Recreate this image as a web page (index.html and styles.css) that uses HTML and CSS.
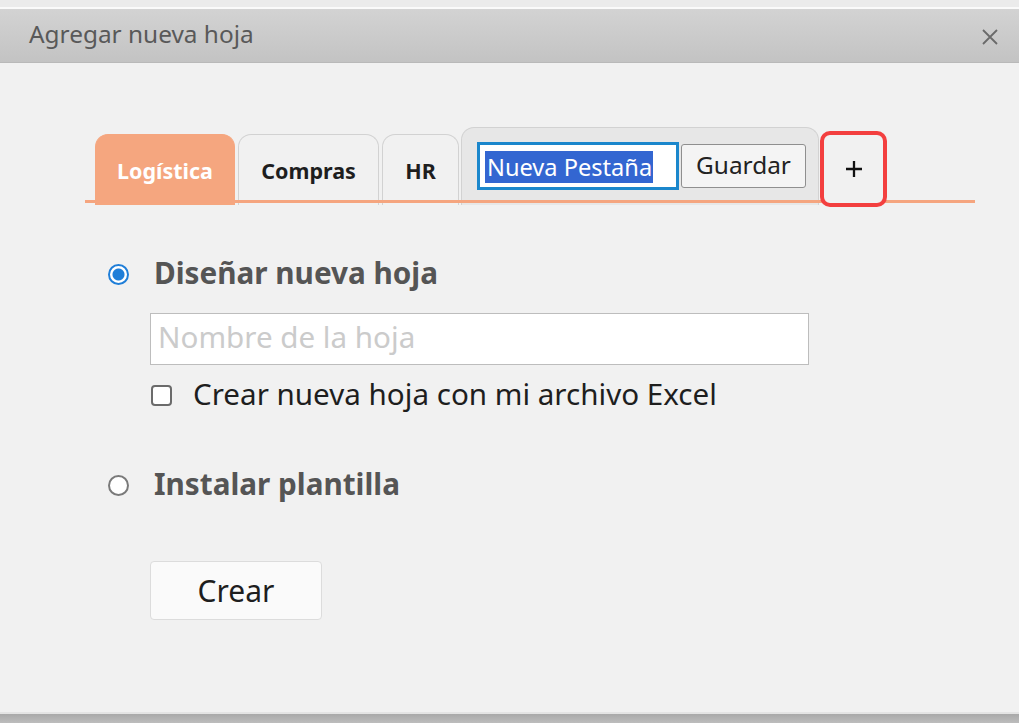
FILE: index.html
```html
<!DOCTYPE html>
<html lang="es">
<head>
<meta charset="utf-8">
<title>Agregar nueva hoja</title>
<link rel="stylesheet" href="styles.css">
</head>
<body>
<div class="window">
  <div class="top-strip"></div>
  <header class="titlebar">
    <span class="title">Agregar nueva hoja</span>
    <svg class="close" width="18" height="18" viewBox="0 0 18 18"><path d="M2 2 L16 16 M16 2 L2 16" stroke="#6a6a6a" stroke-width="1.8" fill="none"/></svg>
  </header>
  <main class="content">
    <div class="tabs">
      <div class="tab tab-active">Logística</div>
      <div class="tab tab-compras">Compras</div>
      <div class="tab tab-hr">HR</div>
      <div class="tab tab-edit">
        <div class="tab-input"><span class="sel">Nueva Pestaña</span></div>
        <div class="save-btn">Guardar</div>
      </div>
      <div class="tab tab-plus"><svg width="18" height="18" viewBox="0 0 18 18"><path d="M9 1 V17 M1 9 H17" stroke="#111" stroke-width="2.3" fill="none"/></svg></div>
    </div>

    <div class="option option-first">
      <span class="radio radio-on"></span>
      <span class="option-label">Diseñar nueva hoja</span>
    </div>
    <div class="sub">
      <div class="name-input">Nombre de la hoja</div>
      <div class="check-row">
        <span class="checkbox"></span>
        <span class="check-label">Crear nueva hoja con mi archivo Excel</span>
      </div>
    </div>

    <div class="option option-second">
      <span class="radio"></span>
      <span class="option-label">Instalar plantilla</span>
    </div>

    <div class="actions">
      <div class="create-btn">Crear</div>
    </div>
  </main>
  <div class="bottom-shadow"></div>
</div>
</body>
</html>
```

FILE: styles.css
```css
* { box-sizing: border-box; }
html, body { margin: 0; padding: 0; }
body {
  width: 1019px;
  height: 723px;
  overflow: hidden;
  background: #f1f1f1;
  font-family: "Noto Sans", "Open Sans", sans-serif;
}
.window {
  display: flex;
  flex-direction: column;
  height: 723px;
}
.top-strip {
  height: 9px;
  background: #ebebeb;
  border-bottom: 2px solid #fafafa;
}
.titlebar {
  height: 54px;
  background: linear-gradient(#d3d3d3, #c3c3c3);
  border-bottom: 1px solid #b9b9b9;
  display: flex;
  align-items: center;
  justify-content: space-between;
  padding: 0 20px 0 29px;
}
.title {
  font-size: 24.4px;
  color: #595959;
  margin-top: -4px;
}
.close { margin-top: 2px; }
.content {
  flex: 1;
  background: #f1f1f1;
  padding-top: 63px;
}
.tabs {
  position: relative;
  display: flex;
  align-items: flex-end;
  padding-left: 95px;
  height: 81px;
}
.tabs::after {
  content: "";
  position: absolute;
  left: 85px;
  width: 890px;
  top: 74px;
  height: 3px;
  background: #f5a57f;
}
.tab {
  height: 71px;
  margin-bottom: 2px;
  border: 1px solid #d2d2d2;
  border-bottom: none;
  border-radius: 13px 13px 0 0;
  display: flex;
  align-items: center;
  justify-content: center;
  font-size: 21.5px;
  font-weight: 700;
  color: #1e1e1e;
  padding-top: 0;
}
.tab-active {
  width: 140px;
  background: #f5a67f;
  border-color: #f5a67f;
  color: #ffffff;
}
.tab-compras { width: 141px; margin-left: 3px; }
.tab-hr { width: 77px; margin-left: 3px; }
.tab-edit {
  width: 358px;
  height: 78px;
  margin-left: 2px;
  background: #e7e7e7;
  justify-content: flex-start;
  align-items: flex-start;
  padding: 14px 0 0 15px;
  font-weight: 400;
}
.tab-input {
  width: 202px;
  height: 48px;
  background: #ffffff;
  border: 3px solid #1b87cc;
  padding: 6px 0 0 5px;
}
.sel {
  display: inline-block;
  background: #3366d1;
  color: #ffffff;
  font-size: 23.6px;
  line-height: 32px;
  padding: 0 1px 0 2px;
}
.save-btn {
  width: 125px;
  height: 44px;
  margin: 2px 0 0 2px;
  border: 1px solid #8f8f8f;
  border-radius: 3px;
  background: #f4f4f4;
  font-size: 24.4px;
  color: #222;
  display: flex;
  align-items: center;
  justify-content: center;
  padding-bottom: 3px;
}
.tab-plus {
  position: relative;
  z-index: 1;
  width: 67px;
  height: 76px;
  margin-left: 1px;
  margin-bottom: 0;
  border: 4px solid #f33f3f;
  border-radius: 10px;
  background: #f1f1f1;
  padding-top: 0;
}
.option {
  display: flex;
  align-items: center;
  padding-left: 108px;
  height: 34px;
}
.option-first { margin-top: 50px; }
.option-second { margin-top: 52px; }
.radio {
  width: 21px;
  height: 21px;
  border-radius: 50%;
  border: 2px solid #7a7a7a;
  background: #ffffff;
  flex-shrink: 0;
}
.radio-on {
  border-color: #1f7ed8;
  background: radial-gradient(circle, #1f7ed8 0 5.5px, #ffffff 6.5px);
}
.option-label {
  margin-left: 25px;
  font-size: 29.7px;
  font-weight: 700;
  color: #555555;
  margin-top: -4px;
}
.sub {
  padding-left: 150px;
  margin-top: 22px;
}
.name-input {
  width: 659px;
  height: 52px;
  background: #ffffff;
  border: 1px solid #bdbdbd;
  font-size: 29.6px;
  color: #cbcbcb;
  padding: 2px 0 0 7px;
}
.check-row {
  display: flex;
  align-items: center;
  height: 42px;
  margin-top: 9px;
}
.checkbox {
  width: 21px;
  height: 21px;
  margin-left: 1px;
  border: 2px solid #6b6b6b;
  border-radius: 4px;
  background: #ffffff;
  flex-shrink: 0;
}
.check-label {
  margin-left: 21px;
  font-size: 29.6px;
  color: #1e1e1e;
  margin-top: -4px;
}
.actions {
  padding-left: 150px;
  margin-top: 59px;
}
.create-btn {
  width: 172px;
  height: 59px;
  background: #fafafa;
  border: 1px solid #dcdcdc;
  border-radius: 4px;
  font-size: 30px;
  color: #1e1e1e;
  display: flex;
  align-items: center;
  justify-content: center;
  padding-bottom: 0;
}
.bottom-shadow {
  height: 11px;
  border-top: 2px solid #e4e4e4;
  background: linear-gradient(#a9a9a9, #bdbdbd);
}
```
